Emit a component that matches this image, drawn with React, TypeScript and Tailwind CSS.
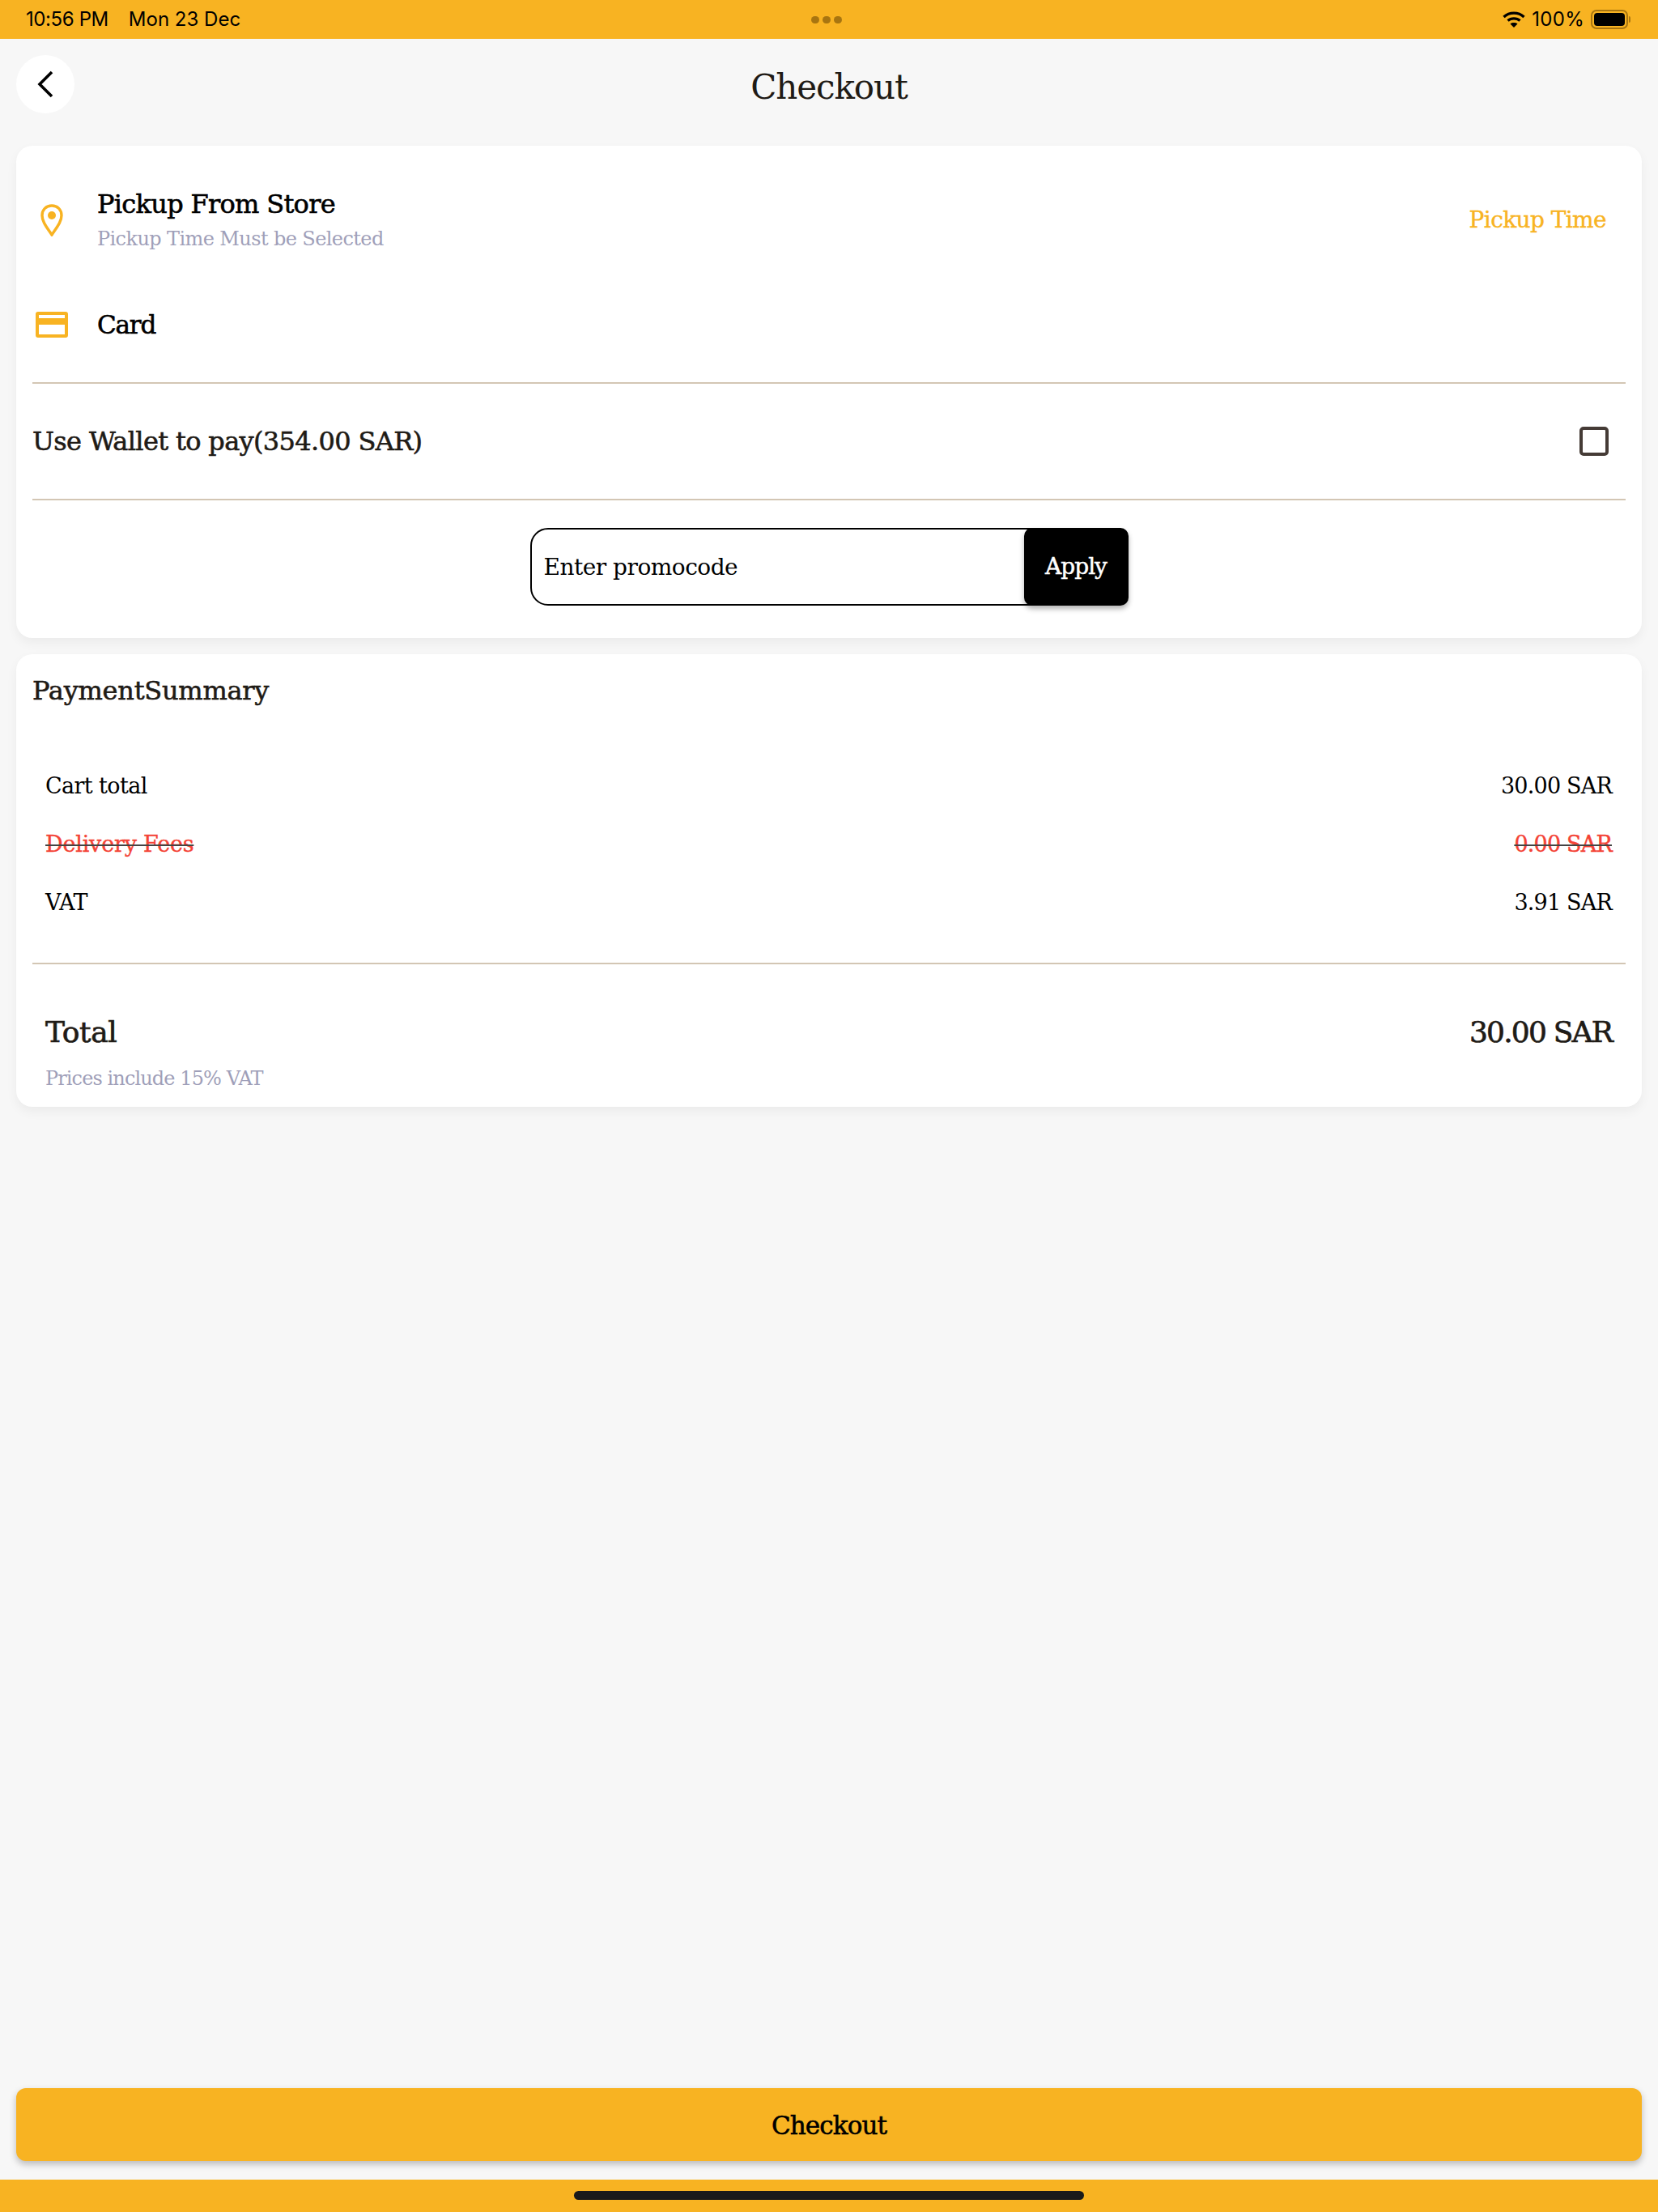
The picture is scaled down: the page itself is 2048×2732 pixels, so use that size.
const slab = "font-['DejaVu_Serif',serif]";

function Wifi() {
  return (
    <svg width="28" height="22" viewBox="0 0 28 22" fill="none" stroke="#000" strokeWidth="3.4">
      <path d="M1.5 8 C8.5 1.5 19.5 1.5 26.5 8" />
      <path d="M6.5 12.5 C10.5 9 17.5 9 21.5 12.5" />
      <path d="M14 21 L9.5 16.5 C12 14.6 16 14.6 18.5 16.5 Z" fill="#000" stroke="none" />
    </svg>
  );
}

function Battery() {
  return (
    <div className="flex items-center">
      <div className="flex h-[24px] w-[46px] rounded-[7px] border-2 border-[#a87510] p-[2px]">
        <div className="flex-1 rounded-[4px] bg-black" />
      </div>
      <div className="ml-[1px] h-[8px] w-[2px] rounded-r-full bg-[#a87510]" />
    </div>
  );
}

function Divider() {
  return <div className="h-[2px] bg-[#d3c6b4]" />;
}

function Row({ label, value, struck }: { label: string; value: string; struck?: boolean }) {
  return (
    <div
      className={`flex h-[72px] items-center justify-between pl-[16px] pr-[17px] text-[27px] ${
        struck
          ? "text-[#f44336] line-through decoration-[#444] decoration-2 [-webkit-text-stroke:0.4px]"
          : "text-black"
      }`}
    >
      <span className={struck ? "tracking-[-0.2px]" : "tracking-[-0.6px]"}>{label}</span>
      <span className="tracking-[-0.8px]">{value}</span>
    </div>
  );
}

export default function App() {
  return (
    <div className={`flex h-[2732px] flex-col bg-[#f7f7f7] ${slab}`}>
      <div className="relative flex h-[48px] items-center justify-between bg-[#f8b322] pl-[32px] pr-[34px] font-['Inter',sans-serif] text-[24px] text-black">
        <div className="flex gap-[25px]">
          <span className="tracking-[-0.4px]">10:56 PM</span>
          <span>Mon 23 Dec</span>
        </div>
        <div className="absolute left-[1002px] top-[20px] flex gap-[4px]">
          <div className="h-[9px] w-[10px] rounded-full bg-[#a87510]" />
          <div className="h-[9px] w-[10px] rounded-full bg-[#a87510]" />
          <div className="h-[9px] w-[10px] rounded-full bg-[#a87510]" />
        </div>
        <div className="flex items-center gap-[8px]">
          <Wifi />
          <span className="tracking-[0.3px]">100%</span>
          <Battery />
        </div>
      </div>

      <div className="relative flex h-[132px] items-start justify-center">
        <button className="absolute left-[20px] top-[20px] flex h-[72px] w-[72px] items-center justify-center rounded-full bg-white">
          <svg width="24" height="36" viewBox="0 0 24 36" fill="none" stroke="#000" strokeWidth="3.6">
            <path d="M20 3 L5 18 L20 33" />
          </svg>
        </button>
        <h1 className="mt-[35px] text-[42px] leading-[50px] tracking-[-1.1px] text-[#1f1b16]">Checkout</h1>
      </div>

      <div className="mx-[20px] flex h-[608px] flex-col rounded-[20px] bg-white px-[20px] shadow-[0_6px_14px_rgba(0,0,0,0.05)]">
        <div className="mt-[36px] flex h-[112px] items-center">
          <svg width="28" height="40" viewBox="0 0 28 40" fill="none" className="ml-[10px]">
            <path d="M14 38 C8 29 2 22 2 14 C2 7 7 2 14 2 C21 2 26 7 26 14 C26 22 20 29 14 38 Z" stroke="#f8b322" strokeWidth="3.4" />
            <circle cx="14" cy="14" r="5" fill="#f8b322" />
          </svg>
          <div className="ml-[42px] flex flex-1 flex-col pt-[2px]">
            <span className="text-[32px] leading-[44px] tracking-[-0.7px] text-black [-webkit-text-stroke:0.6px]">Pickup From Store</span>
            <span className="text-[24px] leading-[42px] tracking-[-0.6px] text-[#9f9fb9]">Pickup Time Must be Selected</span>
          </div>
          <span className="mr-[24px] text-[28px] tracking-[-0.6px] text-[#f8b322] [-webkit-text-stroke:0.4px]">Pickup Time</span>
        </div>

        <div className="mt-[31px] flex h-[84px] items-center">
          <div className="ml-[4px] flex h-[32px] w-[40px] flex-col rounded-[3px] border-[4px] border-[#f8b322]">
            <div className="mt-[4px] h-[8px] bg-[#f8b322]" />
          </div>
          <span className="ml-[36px] text-[31px] tracking-[-1.2px] text-black [-webkit-text-stroke:0.6px]">Card</span>
        </div>

        <div className="mt-[29px]">
          <Divider />
        </div>

        <div className="flex h-[142px] items-center justify-between">
          <span className="text-[32px] tracking-[-0.65px] text-[#1f1b16] [-webkit-text-stroke:0.6px]">Use Wallet to pay(354.00 SAR)</span>
          <div className="mr-[21px] h-[36px] w-[36px] rounded-[5px] border-[4px] border-[#453b36]" />
        </div>

        <Divider />

        <div className="mt-[34px] flex justify-center">
          <div className="flex h-[96px] w-[739px] rounded-[22px] border-2 border-black">
            <div className="flex flex-1 items-center pl-[15px] pt-[2px] text-[28px] tracking-[-0.5px] text-black">Enter promocode</div>
            <button className="-my-[2px] -mr-[2px] flex w-[129px] items-center justify-center rounded-[10px] bg-black text-[28px] tracking-[-1px] text-white shadow-[0_4px_6px_rgba(0,0,0,0.3)] [-webkit-text-stroke:0.5px]">
              Apply
            </button>
          </div>
        </div>
      </div>

      <div className="mx-[20px] mt-[20px] flex h-[559px] flex-col rounded-[20px] bg-white px-[20px] shadow-[0_6px_14px_rgba(0,0,0,0.05)]">
        <div className="mt-[23px] text-[32px] leading-[44px] tracking-[-0.25px] text-[#1f1b16] [-webkit-text-stroke:0.6px]">PaymentSummary</div>
        <div className="mt-[60px]">
          <Row label="Cart total" value="30.00 SAR" />
          <Row label="Delivery Fees" value="0.00 SAR" struck />
          <Row label="VAT" value="3.91 SAR" />
        </div>
        <div className="mt-[38px]">
          <Divider />
        </div>
        <div className="mt-[59px] flex items-center justify-between pl-[16px] pr-[17px] text-[36px] leading-[50px] text-[#1f1b16] [-webkit-text-stroke:0.7px]">
          <span className="tracking-[-0.4px]">Total</span>
          <span className="tracking-[-1.8px]">30.00 SAR</span>
        </div>
        <div className="mt-[15px] pl-[16px] text-[24px] leading-[34px] tracking-[-0.9px] text-[#9f9fb9]">Prices include 15% VAT</div>
      </div>

      <div className="mt-auto px-[20px]">
        <button className="flex h-[90px] w-full items-center justify-center rounded-[12px] bg-[#f8b322] pt-[2px] text-[31px] tracking-[-0.9px] text-black shadow-[0_4px_8px_rgba(0,0,0,0.25)] [-webkit-text-stroke:0.6px]">
          Checkout
        </button>
      </div>

      <div className="mt-[23px] flex h-[40px] justify-center bg-[#f8b322] pt-[14px]">
        <div className="h-[11px] w-[630px] rounded-full bg-[#1a1a1a]" />
      </div>
    </div>
  );
}
